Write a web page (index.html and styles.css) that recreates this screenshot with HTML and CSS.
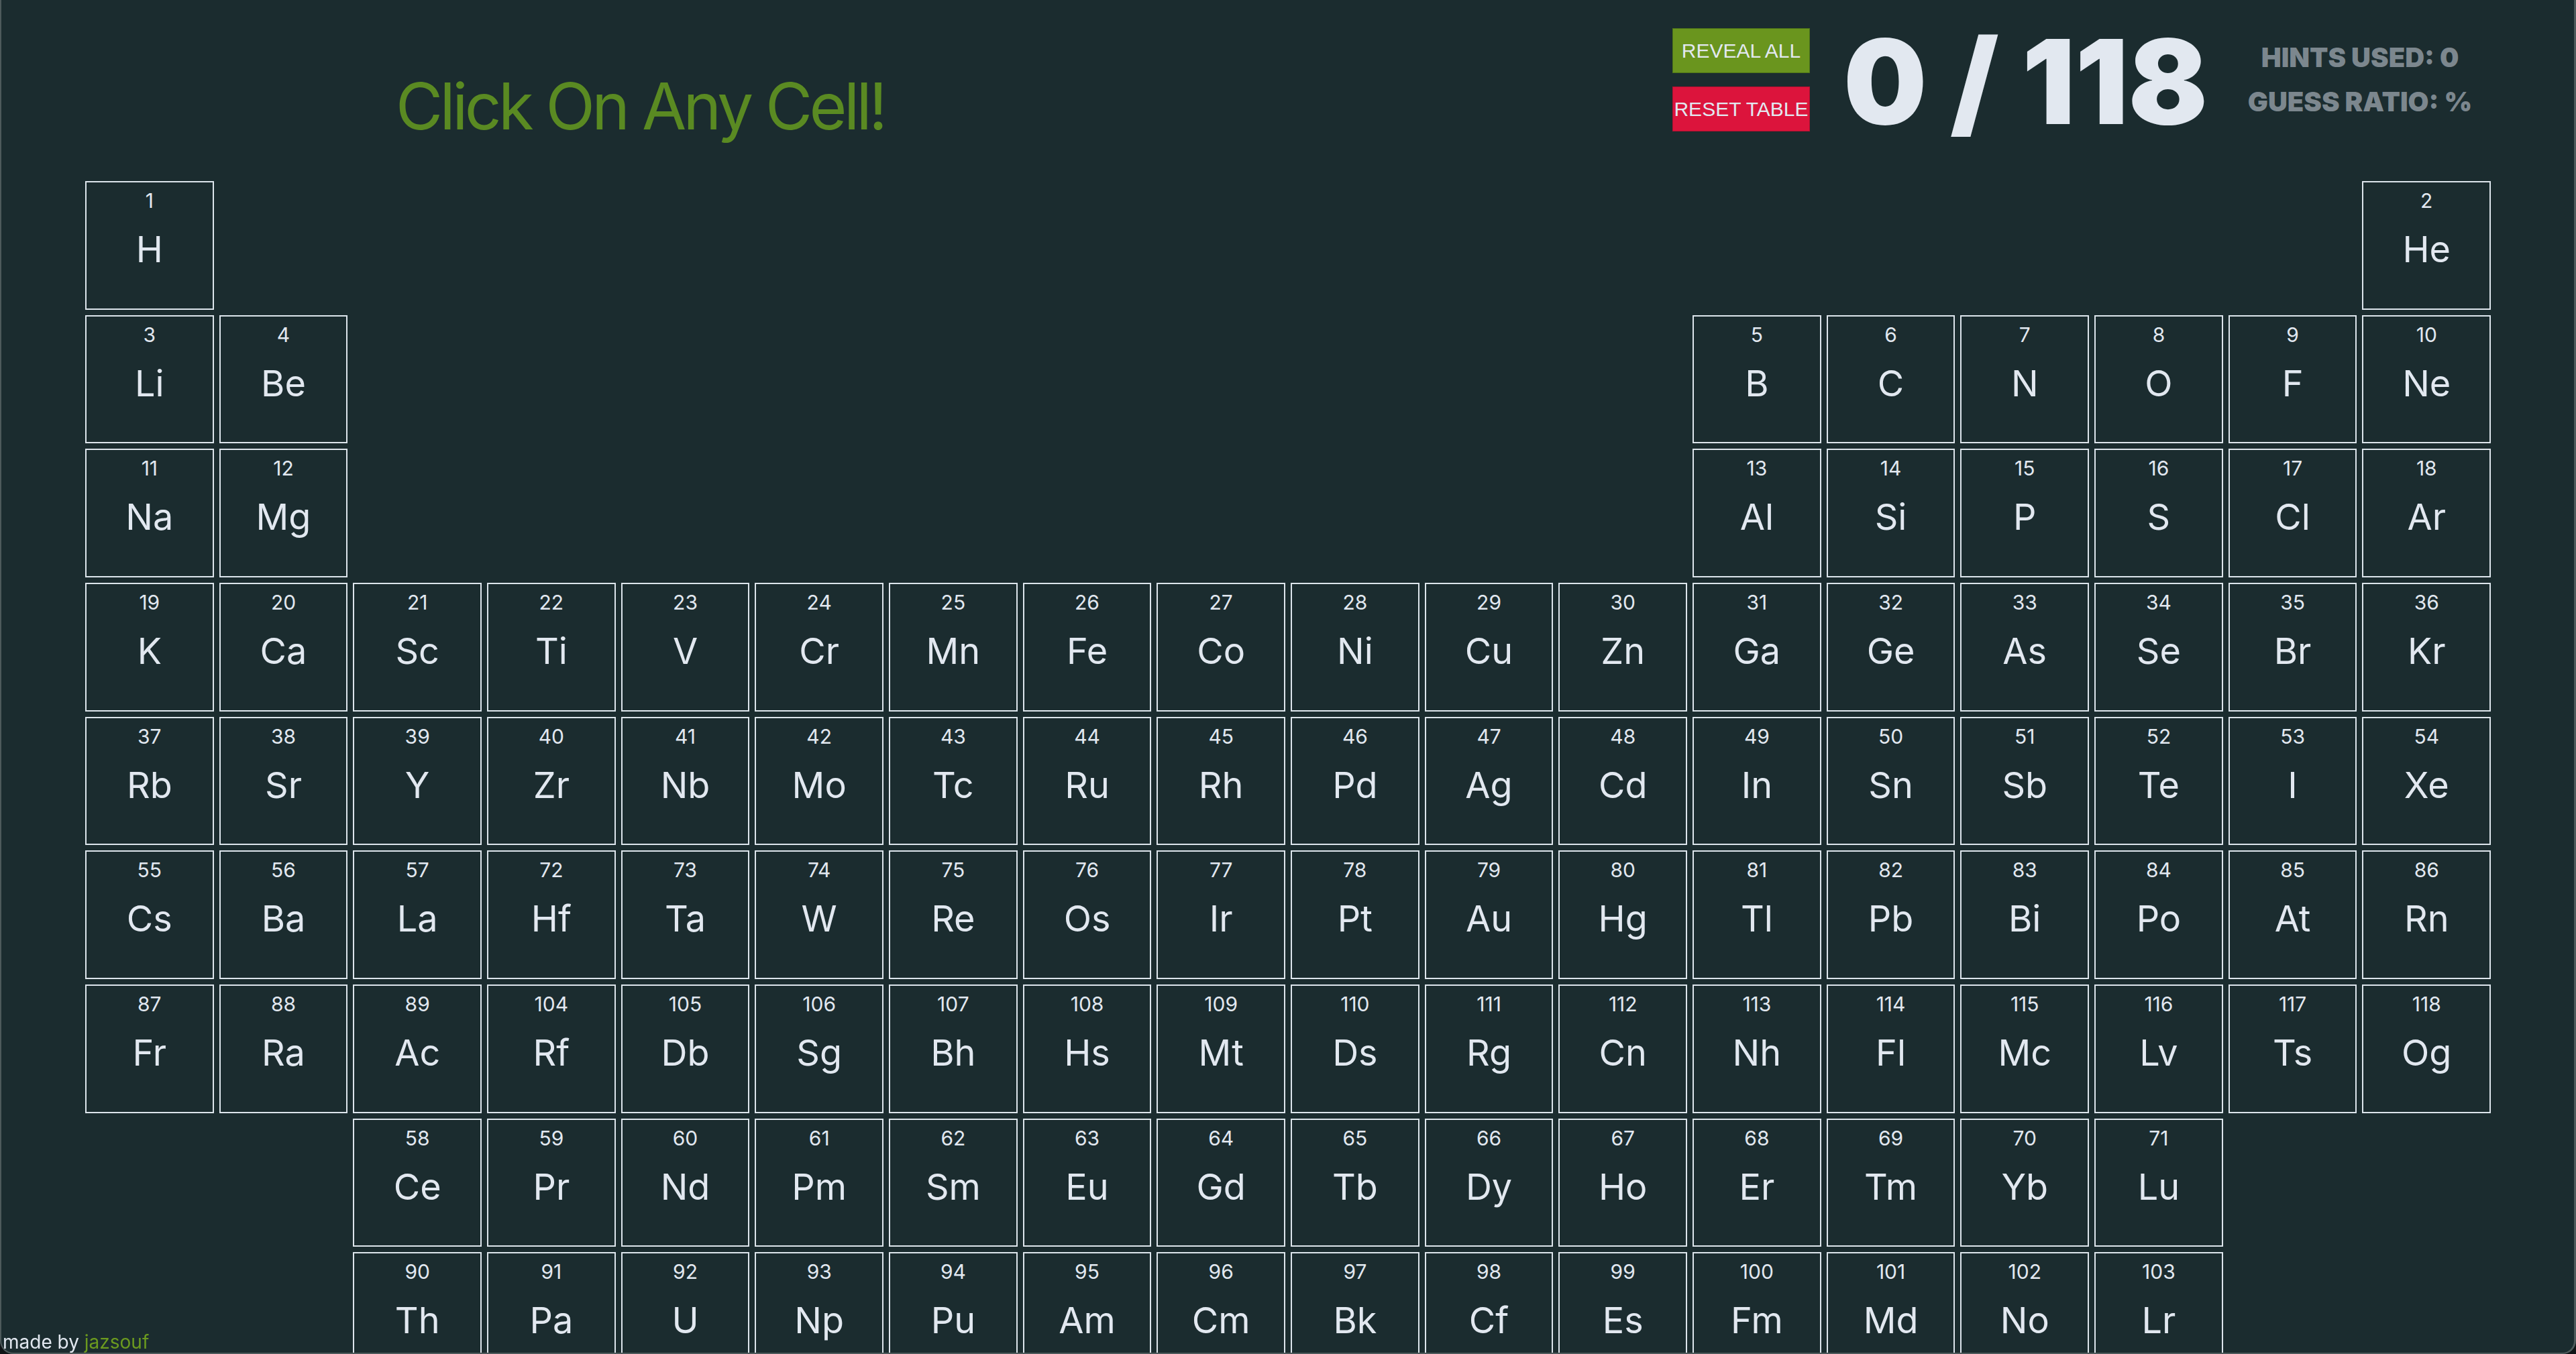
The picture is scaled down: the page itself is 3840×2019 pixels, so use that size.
FILE: index.html
```html
<!DOCTYPE html>
<html lang="en">
<head>
<meta charset="utf-8">
<title>Periodic Table Quiz</title>
<link rel="stylesheet" href="styles.css">
</head>
<body>
<header class="header">
  <h1 class="title">Click On Any Cell!</h1>
  <div class="controls">
    <div class="buttons">
      <button class="btn btn-reveal">REVEAL ALL</button>
      <button class="btn btn-reset">RESET TABLE</button>
    </div>
    <div class="score">0 / 118</div>
    <div class="stats">
      <div>HINTS USED: 0</div>
      <div>GUESS RATIO: %</div>
    </div>
  </div>
</header>
<main class="table">
  <div class="cell"><span class="num">1</span><span class="sym">H</span></div>
  <div class="cell c18"><span class="num">2</span><span class="sym">He</span></div>
  <div class="cell"><span class="num">3</span><span class="sym">Li</span></div>
  <div class="cell"><span class="num">4</span><span class="sym">Be</span></div>
  <div class="cell c13"><span class="num">5</span><span class="sym">B</span></div>
  <div class="cell"><span class="num">6</span><span class="sym">C</span></div>
  <div class="cell"><span class="num">7</span><span class="sym">N</span></div>
  <div class="cell"><span class="num">8</span><span class="sym">O</span></div>
  <div class="cell"><span class="num">9</span><span class="sym">F</span></div>
  <div class="cell"><span class="num">10</span><span class="sym">Ne</span></div>
  <div class="cell"><span class="num">11</span><span class="sym">Na</span></div>
  <div class="cell"><span class="num">12</span><span class="sym">Mg</span></div>
  <div class="cell c13"><span class="num">13</span><span class="sym">Al</span></div>
  <div class="cell"><span class="num">14</span><span class="sym">Si</span></div>
  <div class="cell"><span class="num">15</span><span class="sym">P</span></div>
  <div class="cell"><span class="num">16</span><span class="sym">S</span></div>
  <div class="cell"><span class="num">17</span><span class="sym">Cl</span></div>
  <div class="cell"><span class="num">18</span><span class="sym">Ar</span></div>
  <div class="cell"><span class="num">19</span><span class="sym">K</span></div>
  <div class="cell"><span class="num">20</span><span class="sym">Ca</span></div>
  <div class="cell"><span class="num">21</span><span class="sym">Sc</span></div>
  <div class="cell"><span class="num">22</span><span class="sym">Ti</span></div>
  <div class="cell"><span class="num">23</span><span class="sym">V</span></div>
  <div class="cell"><span class="num">24</span><span class="sym">Cr</span></div>
  <div class="cell"><span class="num">25</span><span class="sym">Mn</span></div>
  <div class="cell"><span class="num">26</span><span class="sym">Fe</span></div>
  <div class="cell"><span class="num">27</span><span class="sym">Co</span></div>
  <div class="cell"><span class="num">28</span><span class="sym">Ni</span></div>
  <div class="cell"><span class="num">29</span><span class="sym">Cu</span></div>
  <div class="cell"><span class="num">30</span><span class="sym">Zn</span></div>
  <div class="cell"><span class="num">31</span><span class="sym">Ga</span></div>
  <div class="cell"><span class="num">32</span><span class="sym">Ge</span></div>
  <div class="cell"><span class="num">33</span><span class="sym">As</span></div>
  <div class="cell"><span class="num">34</span><span class="sym">Se</span></div>
  <div class="cell"><span class="num">35</span><span class="sym">Br</span></div>
  <div class="cell"><span class="num">36</span><span class="sym">Kr</span></div>
  <div class="cell"><span class="num">37</span><span class="sym">Rb</span></div>
  <div class="cell"><span class="num">38</span><span class="sym">Sr</span></div>
  <div class="cell"><span class="num">39</span><span class="sym">Y</span></div>
  <div class="cell"><span class="num">40</span><span class="sym">Zr</span></div>
  <div class="cell"><span class="num">41</span><span class="sym">Nb</span></div>
  <div class="cell"><span class="num">42</span><span class="sym">Mo</span></div>
  <div class="cell"><span class="num">43</span><span class="sym">Tc</span></div>
  <div class="cell"><span class="num">44</span><span class="sym">Ru</span></div>
  <div class="cell"><span class="num">45</span><span class="sym">Rh</span></div>
  <div class="cell"><span class="num">46</span><span class="sym">Pd</span></div>
  <div class="cell"><span class="num">47</span><span class="sym">Ag</span></div>
  <div class="cell"><span class="num">48</span><span class="sym">Cd</span></div>
  <div class="cell"><span class="num">49</span><span class="sym">In</span></div>
  <div class="cell"><span class="num">50</span><span class="sym">Sn</span></div>
  <div class="cell"><span class="num">51</span><span class="sym">Sb</span></div>
  <div class="cell"><span class="num">52</span><span class="sym">Te</span></div>
  <div class="cell"><span class="num">53</span><span class="sym">I</span></div>
  <div class="cell"><span class="num">54</span><span class="sym">Xe</span></div>
  <div class="cell"><span class="num">55</span><span class="sym">Cs</span></div>
  <div class="cell"><span class="num">56</span><span class="sym">Ba</span></div>
  <div class="cell"><span class="num">57</span><span class="sym">La</span></div>
  <div class="cell"><span class="num">72</span><span class="sym">Hf</span></div>
  <div class="cell"><span class="num">73</span><span class="sym">Ta</span></div>
  <div class="cell"><span class="num">74</span><span class="sym">W</span></div>
  <div class="cell"><span class="num">75</span><span class="sym">Re</span></div>
  <div class="cell"><span class="num">76</span><span class="sym">Os</span></div>
  <div class="cell"><span class="num">77</span><span class="sym">Ir</span></div>
  <div class="cell"><span class="num">78</span><span class="sym">Pt</span></div>
  <div class="cell"><span class="num">79</span><span class="sym">Au</span></div>
  <div class="cell"><span class="num">80</span><span class="sym">Hg</span></div>
  <div class="cell"><span class="num">81</span><span class="sym">Tl</span></div>
  <div class="cell"><span class="num">82</span><span class="sym">Pb</span></div>
  <div class="cell"><span class="num">83</span><span class="sym">Bi</span></div>
  <div class="cell"><span class="num">84</span><span class="sym">Po</span></div>
  <div class="cell"><span class="num">85</span><span class="sym">At</span></div>
  <div class="cell"><span class="num">86</span><span class="sym">Rn</span></div>
  <div class="cell"><span class="num">87</span><span class="sym">Fr</span></div>
  <div class="cell"><span class="num">88</span><span class="sym">Ra</span></div>
  <div class="cell"><span class="num">89</span><span class="sym">Ac</span></div>
  <div class="cell"><span class="num">104</span><span class="sym">Rf</span></div>
  <div class="cell"><span class="num">105</span><span class="sym">Db</span></div>
  <div class="cell"><span class="num">106</span><span class="sym">Sg</span></div>
  <div class="cell"><span class="num">107</span><span class="sym">Bh</span></div>
  <div class="cell"><span class="num">108</span><span class="sym">Hs</span></div>
  <div class="cell"><span class="num">109</span><span class="sym">Mt</span></div>
  <div class="cell"><span class="num">110</span><span class="sym">Ds</span></div>
  <div class="cell"><span class="num">111</span><span class="sym">Rg</span></div>
  <div class="cell"><span class="num">112</span><span class="sym">Cn</span></div>
  <div class="cell"><span class="num">113</span><span class="sym">Nh</span></div>
  <div class="cell"><span class="num">114</span><span class="sym">Fl</span></div>
  <div class="cell"><span class="num">115</span><span class="sym">Mc</span></div>
  <div class="cell"><span class="num">116</span><span class="sym">Lv</span></div>
  <div class="cell"><span class="num">117</span><span class="sym">Ts</span></div>
  <div class="cell"><span class="num">118</span><span class="sym">Og</span></div>
  <div class="cell c3"><span class="num">58</span><span class="sym">Ce</span></div>
  <div class="cell"><span class="num">59</span><span class="sym">Pr</span></div>
  <div class="cell"><span class="num">60</span><span class="sym">Nd</span></div>
  <div class="cell"><span class="num">61</span><span class="sym">Pm</span></div>
  <div class="cell"><span class="num">62</span><span class="sym">Sm</span></div>
  <div class="cell"><span class="num">63</span><span class="sym">Eu</span></div>
  <div class="cell"><span class="num">64</span><span class="sym">Gd</span></div>
  <div class="cell"><span class="num">65</span><span class="sym">Tb</span></div>
  <div class="cell"><span class="num">66</span><span class="sym">Dy</span></div>
  <div class="cell"><span class="num">67</span><span class="sym">Ho</span></div>
  <div class="cell"><span class="num">68</span><span class="sym">Er</span></div>
  <div class="cell"><span class="num">69</span><span class="sym">Tm</span></div>
  <div class="cell"><span class="num">70</span><span class="sym">Yb</span></div>
  <div class="cell"><span class="num">71</span><span class="sym">Lu</span></div>
  <div class="cell c3"><span class="num">90</span><span class="sym">Th</span></div>
  <div class="cell"><span class="num">91</span><span class="sym">Pa</span></div>
  <div class="cell"><span class="num">92</span><span class="sym">U</span></div>
  <div class="cell"><span class="num">93</span><span class="sym">Np</span></div>
  <div class="cell"><span class="num">94</span><span class="sym">Pu</span></div>
  <div class="cell"><span class="num">95</span><span class="sym">Am</span></div>
  <div class="cell"><span class="num">96</span><span class="sym">Cm</span></div>
  <div class="cell"><span class="num">97</span><span class="sym">Bk</span></div>
  <div class="cell"><span class="num">98</span><span class="sym">Cf</span></div>
  <div class="cell"><span class="num">99</span><span class="sym">Es</span></div>
  <div class="cell"><span class="num">100</span><span class="sym">Fm</span></div>
  <div class="cell"><span class="num">101</span><span class="sym">Md</span></div>
  <div class="cell"><span class="num">102</span><span class="sym">No</span></div>
  <div class="cell"><span class="num">103</span><span class="sym">Lr</span></div>
</main>
<div class="frame"></div>
<footer class="credit">made by <span class="author">jazsouf</span></footer>
</body>
</html>
```

FILE: styles.css
```css
html, body {
  margin: 0;
  padding: 0;
}

body {
  background: #1b2c2f;
  color: #e2e8f0;
  font-family: Inter, "Liberation Sans", sans-serif;
}

.header {
  display: flex;
  align-items: flex-start;
  height: 270px;
}

.title {
  margin: 110px 0 0 590px;
  font-size: 96px;
  line-height: 97px;
  font-weight: 400;
  letter-spacing: -4.6px;
  color: #5a8a22;
  white-space: nowrap;
}

.controls {
  margin-left: auto;
  margin-right: 122px;
  display: flex;
  align-items: flex-start;
}

.buttons {
  display: flex;
  flex-direction: column;
  gap: 20px;
  margin-top: 42px;
  width: 205px;
}

.btn {
  box-sizing: border-box;
  width: 205px;
  height: 67px;
  padding: 0;
  display: flex;
  align-items: center;
  justify-content: center;
  font-family: "Liberation Sans", Arial, sans-serif;
  font-size: 30px;
  color: #e2e8f0;
  white-space: nowrap;
  overflow: visible;
}

.btn-reveal {
  background: #6a951e;
  border: 1px solid #4d7418;
}

.btn-reset {
  background: #dc143c;
  border: 1px solid #b3102f;
}

.score {
  margin-left: 50px;
  margin-top: 34px;
  width: 570px;
  font-size: 175px;
  line-height: 175px;
  font-weight: 900;
  color: #e2e8f0;
  white-space: nowrap;
}

.stats {
  width: 400px;
  margin-top: 53px;
  text-align: center;
  font-size: 40px;
  line-height: 66px;
  font-weight: 900;
  color: #7c878e;
  white-space: nowrap;
}

.table {
  display: grid;
  grid-template-columns: repeat(18, 1fr);
  gap: 8px;
  width: 3586px;
  margin: 0 auto;
}

.cell {
  box-sizing: border-box;
  aspect-ratio: 1;
  border: 2px solid #dde5ec;
  display: flex;
  flex-direction: column;
  align-items: center;
  color: #e2e8f0;
}

.c3 { grid-column-start: 3; }
.c13 { grid-column-start: 13; }
.c18 { grid-column-start: 18; }

.num {
  margin-top: 12px;
  font-size: 30px;
  line-height: 30px;
}

.sym {
  margin-top: 31px;
  font-size: 54px;
  line-height: 54px;
}

.frame {
  position: fixed;
  top: 0;
  left: 0;
  right: 0;
  bottom: 0;
  border-style: solid;
  border-color: #4e5a5b;
  border-width: 0 3px 2px 2px;
  border-radius: 0 0 20px 20px;
  box-shadow: 0 0 0 40px #0f1416;
  pointer-events: none;
}

.credit {
  position: fixed;
  left: 4px;
  bottom: 0;
  font-size: 28px;
  line-height: 1.25;
  color: #e2e8f0;
}

.author {
  color: #6b9a1f;
}
```
